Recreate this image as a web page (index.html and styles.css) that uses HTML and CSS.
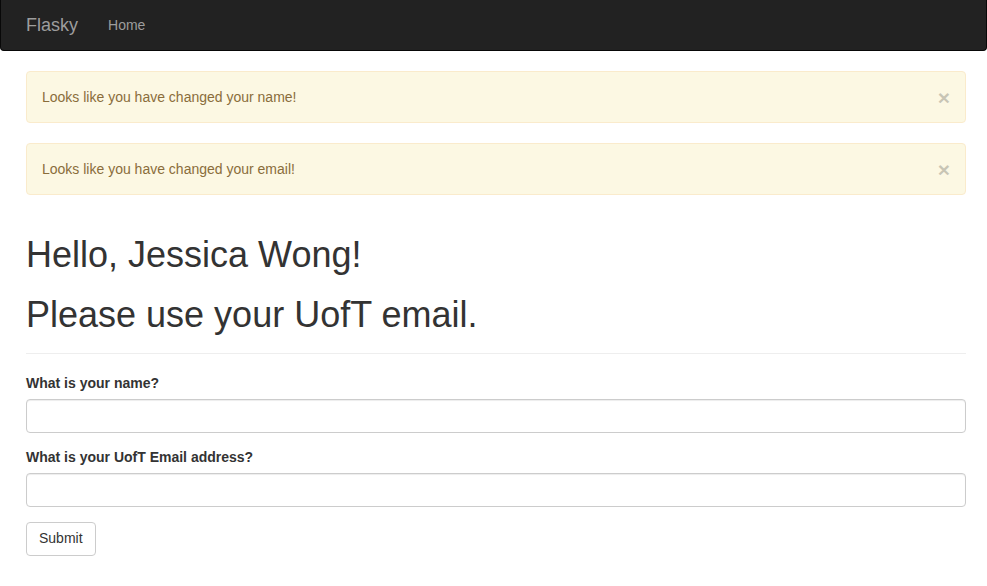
FILE: index.html
```html
<!DOCTYPE html>
<html lang="en">
<head>
<meta charset="utf-8">
<title>Flasky</title>
<link rel="stylesheet" href="styles.css">
</head>
<body>
<nav class="navbar">
  <div class="container nav-inner">
    <a class="brand" href="#">Flasky</a>
    <a class="nav-link" href="#">Home</a>
  </div>
</nav>
<div class="container">
  <div class="alert">
    <span>Looks like you have changed your name!</span>
    <button class="close" type="button">&times;</button>
  </div>
  <div class="alert">
    <span>Looks like you have changed your email!</span>
    <button class="close" type="button">&times;</button>
  </div>
  <div class="page-header">
    <h1>Hello, Jessica Wong!</h1>
    <h1>Please use your UofT email.</h1>
  </div>
  <form class="form">
    <div class="form-group">
      <label for="name">What is your name?</label>
      <input id="name" class="form-control" type="text">
    </div>
    <div class="form-group">
      <label for="email">What is your UofT Email address?</label>
      <input id="email" class="form-control" type="text">
    </div>
    <button class="btn" type="button">Submit</button>
  </form>
</div>
</body>
</html>
```
FILE: styles.css
```css
* { box-sizing: border-box; }
html, body { margin: 0; }
body {
  font-family: "Liberation Sans", Arial, Helvetica, sans-serif;
  font-size: 14px;
  line-height: 1.42857;
  color: #333;
  background: #fff;
}
.container {
  width: 970px;
  margin-left: 11px;
  padding: 0 15px;
}
.navbar {
  background: #222;
  border: 1px solid #080808;
  border-top: 0;
  border-radius: 0 0 4px 4px;
  height: 51px;
  margin-bottom: 20px;
}
.nav-inner {
  display: flex;
  align-items: center;
  height: 50px;
}
.brand {
  font-size: 18px;
  line-height: 20px;
  color: #9d9d9d;
  text-decoration: none;
  padding: 15px 15px 15px 0;
  margin-left: -1px;
}
.nav-link {
  color: #9d9d9d;
  text-decoration: none;
  padding: 15px;
  line-height: 20px;
}
.alert {
  display: flex;
  justify-content: space-between;
  align-items: flex-start;
  background: #fcf8e3;
  border: 1px solid #faebcc;
  color: #8a6d3b;
  padding: 16px 15px 14px 15px;
  border-radius: 4px;
  margin-bottom: 20px;
  height: 52px;
}
.close {
  background: none;
  border: 0;
  padding: 0;
  margin-right: 0;
  font-family: inherit;
  font-size: 21px;
  font-weight: bold;
  line-height: 1;
  color: #000;
  opacity: .2;
  text-shadow: 0 1px 0 #fff;
  position: relative;
  top: -1px;
  cursor: pointer;
}
.page-header {
  margin: 40px 0 20px;
  padding-bottom: 9px;
  border-bottom: 1px solid #eee;
}
h1 {
  font-size: 36px;
  font-weight: 500;
  line-height: 1.1;
  margin: 20px 0 10px;
}
.page-header h1:first-child { margin-top: 0; }
.form-group { margin-bottom: 15px; }
label {
  display: block;
  font-weight: bold;
  margin-bottom: 5px;
}
.form-control {
  display: block;
  width: 100%;
  height: 34px;
  padding: 6px 12px;
  font-size: 14px;
  color: #555;
  background: #fff;
  border: 1px solid #ccc;
  border-radius: 4px;
  box-shadow: inset 0 1px 1px rgba(0,0,0,.075);
}
.btn {
  display: inline-block;
  height: 34px;
  padding: 6px 12px;
  font-family: inherit;
  font-size: 14px;
  line-height: 1.42857;
  color: #333;
  background: #fff;
  border: 1px solid #ccc;
  border-radius: 4px;
}
```
